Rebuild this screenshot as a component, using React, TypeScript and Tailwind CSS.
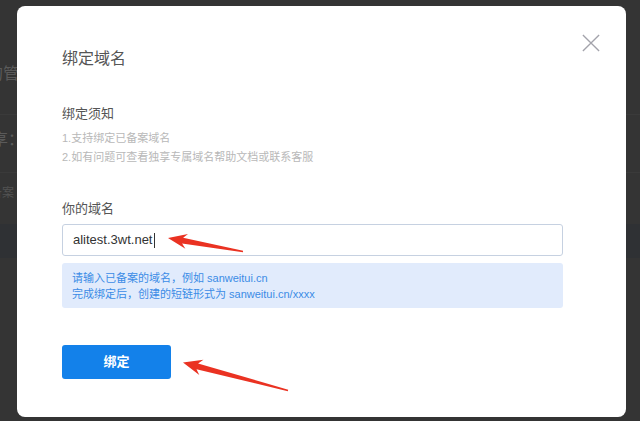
import React from "react";

type P = [number, number];

function arrowPoints(t: P, e: P, L: number, W: number, w1: number, w0: number): string {
  const dx = e[0] - t[0];
  const dy = e[1] - t[1];
  const len = Math.hypot(dx, dy);
  const ux = dx / len;
  const uy = dy / len;
  const nx = -uy;
  const ny = ux;
  const pts: P[] = [
    t,
    [t[0] + ux * L + nx * W, t[1] + uy * L + ny * W],
    [t[0] + ux * L * 0.78 + nx * w1, t[1] + uy * L * 0.78 + ny * w1],
    [e[0] + nx * w0, e[1] + ny * w0],
    [e[0] - nx * w0, e[1] - ny * w0],
    [t[0] + ux * L * 0.78 - nx * w1, t[1] + uy * L * 0.78 - ny * w1],
    [t[0] + ux * L - nx * W, t[1] + uy * L - ny * W],
  ];
  return pts.map((p) => `${p[0].toFixed(1)},${p[1].toFixed(1)}`).join(" ");
}

export default function App() {
  const font = { fontFamily: '"Liberation Sans", "Noto Sans CJK SC", sans-serif' };
  return (
    <div className="relative h-[421px] w-[640px] overflow-hidden bg-[#343434]" style={font}>
      {/* background page (dimmed) */}
      <div className="flex flex-col text-[#5a5a5a]">
        <div className="h-[63px]" />
        <div className="flex h-[22px] items-center ml-[-13px] text-[16px] leading-none">的管</div>
        <div className="h-[30px] border-b border-[#3a3a3a]" />
        <div className="h-[14px]" />
        <div className="flex h-[22px] items-center ml-[-8px] text-[16px] leading-none">享：</div>
        <div className="h-[22px] border-b border-[#3a3a3a]" />
        <div className="h-[12px]" />
        <div className="flex h-[16px] items-center ml-[-10px] text-[12px] leading-none text-[#525252]">备案</div>
        <div className="h-[23px]" />
        <div className="h-[34px] bg-[#2f3134]" />
      </div>

      {/* modal */}
      <div className="absolute left-[17px] top-[6px] h-[411px] w-[609px] rounded-[8px] bg-white">
        <button className="absolute right-[26px] top-[28px] flex h-[18px] w-[18px] items-center justify-center text-[#a3a3ab]">
          <svg width="20" height="20" viewBox="0 0 20 20" fill="none" stroke="currentColor" strokeWidth="1.5">
            <path d="M1 1 L19 19 M19 1 L1 19" />
          </svg>
        </button>
        <div className="flex flex-col pl-[45px] pt-[43px] pr-[63px]">
          <div className="text-[16px] leading-[20px] text-[#555]">绑定域名</div>
          <div className="mt-[37px] text-[13px] leading-[16px] text-[#555]">绑定须知</div>
          <div className="mt-[7px] text-[11px] leading-[19px] text-[#b8b8b8]">
            <div>1.支持绑定已备案域名</div>
            <div>2.如有问题可查看独享专属域名帮助文档或联系客服</div>
          </div>
          <div className="mt-[34px] text-[13px] leading-[16px] text-[#555]">你的域名</div>
          <div className="mt-[7px] flex h-[32px] items-center rounded-[3px] border border-[#c6d1e1] px-[10px] text-[13px] text-[#333]">
            <span>alitest.3wt.net</span>
            <span className="ml-[1px] h-[15px] w-px bg-[#333]" />
          </div>
          <div className="mt-[7px] flex h-[45px] flex-col justify-center rounded-[3px] bg-[#e1ebfc] px-[10px] text-[11px] leading-[16px] text-[#3b8be6]">
            <div>请输入已备案的域名，例如 sanweitui.cn</div>
            <div>完成绑定后，创建的短链形式为 sanweitui.cn/xxxx</div>
          </div>
          <div className="mt-[37px]">
            <button className="flex h-[34px] w-[109px] items-center justify-center rounded-[3px] bg-[#1381ea] text-[13px] font-semibold text-white">
              绑定
            </button>
          </div>
        </div>
      </div>

      {/* annotation arrows */}
      <svg className="pointer-events-none absolute left-0 top-0" width="640" height="421">
        <polygon points={arrowPoints([168, 238], [243, 251.5], 19, 7.5, 3, 0.8)} fill="#ea3222" />
        <polygon points={arrowPoints([183, 362.5], [288, 390.5], 19, 8, 3, 0.8)} fill="#ea3222" />
      </svg>
    </div>
  );
}
